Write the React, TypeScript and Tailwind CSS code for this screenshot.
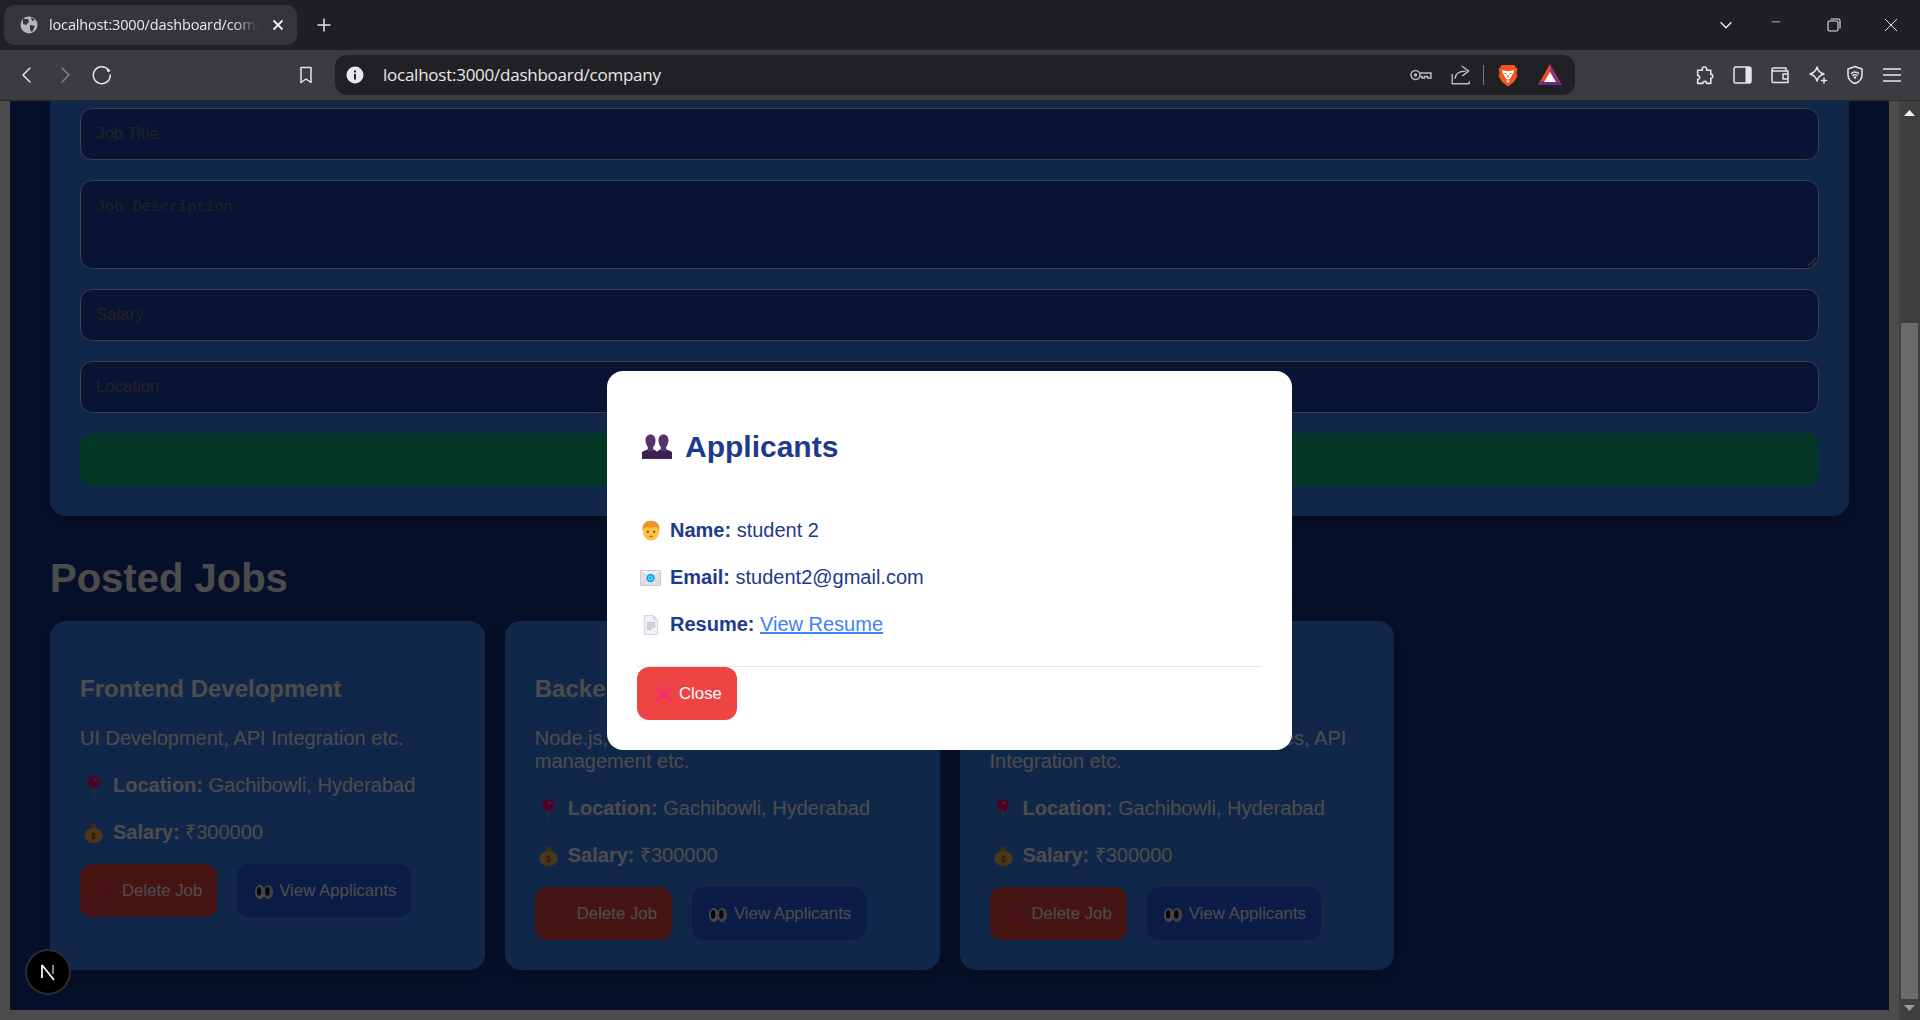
import React from "react";

const sans = "font-['Liberation_Sans',Arial,sans-serif]";

function Cross({ cls }: { cls: string }) {
  return (
    <svg viewBox="0 0 24 24" preserveAspectRatio="none" className={cls}>
      <path d="M2 1 L22 23 M22 1 L2 23" stroke="#f8316a" strokeWidth="5" fill="none" />
    </svg>
  );
}
function Eyes({ cls }: { cls: string }) {
  return (
    <svg viewBox="0 0 24 24" preserveAspectRatio="none" className={cls}>
      <ellipse cx="6.500" cy="12" rx="6.500" ry="12" fill="#f0f0f5" />
      <ellipse cx="17.500" cy="12" rx="6.500" ry="12" fill="#dedee6" />
      <ellipse cx="5.500" cy="11" rx="3" ry="7.500" fill="#1e1630" />
      <ellipse cx="16.500" cy="11" rx="3" ry="7.500" fill="#1e1630" />
    </svg>
  );
}
function Pin({ cls }: { cls: string }) {
  return (
    <svg viewBox="0 0 12 20" className={cls}>
      <rect x="5.400" y="10" width="1.200" height="10" fill="#a0a0a8" />
      <circle cx="6" cy="6" r="6" fill="#ff0a78" />
      <circle cx="7.500" cy="3.800" r="1.200" fill="#ff9ac0" />
    </svg>
  );
}
function Bag({ cls }: { cls: string }) {
  return (
    <svg viewBox="0 0 24 24" preserveAspectRatio="none" className={cls}>
      <path d="M8.500 0.500 L12 2 L15.500 0.500 L14.500 7 L9.500 7 Z" fill="#e09a30" />
      <ellipse cx="12" cy="15" rx="11.500" ry="9" fill="#ffbd4d" />
      <text x="12" y="19.500" textAnchor="middle" fontSize="11" fontFamily="Liberation Sans" fill="#6b4410">$</text>
    </svg>
  );
}
function Busts({ cls }: { cls: string }) {
  return (
    <svg viewBox="0 0 30 25" className={cls}>
      <path d="M0 25 L0 20 C0 17.500 3 16.500 5.500 15.500 L6 13.500 C4.500 11 3.500 8.500 3.500 6.500 C3.500 3 5.500 0.500 8.500 0.500 C11.500 0.500 13.500 3 13.500 6.500 C13.500 8.500 13 11 11 13.500 L11.500 15.500 C13.500 16.500 15 17 15 20 L15 25 Z" fill="#53326f" />
      <path d="M15 25 L15 20 C15 17 16.500 16.500 18.500 15.500 L19 13.500 C17 11 16.500 8.500 16.500 6.500 C16.500 3 18.500 0.500 21.500 0.500 C24.500 0.500 26.500 3 26.500 6.500 C26.500 8.500 25.500 11 24 13.500 L24.500 15.500 C27 16.500 30 17.500 30 20 L30 25 Z" fill="#53326f" />
      <path d="M0 18.500 C1 17 3 16.500 5 16 C6 18 10.500 18 11.500 16 C13 16.500 14 17 15 18 C16 17 17 16.500 18.500 16 C19.500 18 24 18 25 16 C27 16.500 29 17 30 18.500 V24.500 H0 Z" fill="#3b2150" />
    </svg>
  );
}
function Person({ cls }: { cls: string }) {
  return (
    <svg viewBox="0 0 24 26" className={cls}>
      <ellipse cx="12" cy="14.500" rx="10" ry="11" fill="#fdc23e" />
      <path d="M2 14 C0 6 5 1 12 1 C19 1 24 6 22 14 C21 11.500 19.500 9.500 18 8.500 C14 10 9 10 6 8.500 C4.500 9.500 3 11.500 2 14 Z" fill="#f2902a" />
      <circle cx="8" cy="14.500" r="1.300" fill="#5d3b1e" />
      <circle cx="16" cy="14.500" r="1.300" fill="#5d3b1e" />
      <ellipse cx="12" cy="20.500" rx="2.200" ry="1" fill="#d2455a" />
    </svg>
  );
}
function Mail({ cls }: { cls: string }) {
  return (
    <svg viewBox="0 0 24 18" className={cls}>
      <rect x="0.500" y="0.500" width="23" height="17" rx="1" fill="#e3dfe6" stroke="#c4bfd0" />
      <path d="M0.500 1 L12 10 L23.500 1" fill="#f4f2f6" stroke="#c4bfd0" strokeWidth="0.800" />
      <path d="M0.500 17.500 L9 8 M23.500 17.500 L15 8" stroke="#c4bfd0" strokeWidth="0.800" />
      <circle cx="12" cy="9" r="4.800" fill="#0fa5ee" />
      <circle cx="12" cy="9" r="2.200" fill="none" stroke="#bfeaff" strokeWidth="0.900" />
    </svg>
  );
}
function Page({ cls }: { cls: string }) {
  return (
    <svg viewBox="0 0 18 24" className={cls}>
      <path d="M1 0.700 L12 0.700 L17 5.700 L17 23.300 L1 23.300 Z" fill="#f2eff6" stroke="#cfc8da" strokeWidth="1" />
      <path d="M12 0.700 L12 5.700 L17 5.700 Z" fill="#d8d2e2" />
      <path d="M4 9.500 H14 M4 12 H14 M4 14.500 H14 M4 17 H10" stroke="#a39bb0" strokeWidth="1" />
    </svg>
  );
}

function Row({ icon, label, children }: { icon: React.ReactNode; label: string; children: React.ReactNode }) {
  return (
    <p className="flex items-center h-[23px] mb-[24px] text-[20px] leading-[23px] whitespace-nowrap">
      <span className="flex items-center justify-center w-[27px] h-[23px] mr-[6px] shrink-0">{icon}</span>
      <b className="font-bold">{label}</b>
      <span className="ml-[5.500px]">{children}</span>
    </p>
  );
}

function JobButton({ red, icon, text }: { red?: boolean; icon: React.ReactNode; text: string }) {
  return (
    <button className={`flex items-center h-[53px] px-[15px] rounded-[12px] text-[16.800px] text-white ${red ? "bg-[#ef4444]" : "bg-[#2563eb]"}`}>
      <span className="flex items-center justify-center w-[23px] h-[22px] mr-[4px]">{icon}</span>
      {text}
    </button>
  );
}

function JobCard({ title, desc }: { title: string; desc: string }) {
  return (
    <div className="bg-[#3b82f6] rounded-[16px] p-[30px] flex flex-col text-white shadow-[0_4px_20px_rgba(0,0,0,0.3)]">
      <h3 className="text-[24px] leading-[28px] font-bold mt-[24px] mb-[24px]">{title}</h3>
      <p className="text-[20px] leading-[23px] mb-[24px]">{desc}</p>
      <Row icon={<Pin cls="w-[12px] h-[20px]" />} label="Location:">Gachibowli, Hyderabad</Row>
      <Row icon={<Bag cls="w-[19px] h-[20px]" />} label="Salary:">₹300000</Row>
      <div className="flex gap-[20px] -mt-[4px]">
        <JobButton red icon={<Cross cls="w-[18px] h-[16px]" />} text="Delete Job" />
        <JobButton icon={<Eyes cls="w-[18px] h-[14px] mt-[3px]" />} text="View Applicants" />
      </div>
    </div>
  );
}

const inp = "w-full h-[52px] px-[15px] rounded-[12px] bg-[#1e40af] border border-[#cbd5e1] flex items-center text-[16.800px] text-[#757575]";

function Ic({ w, children, cls = "" }: { w: string; children: React.ReactNode; cls?: string }) {
  return <span className={`flex items-center justify-center shrink-0 ${w} ${cls}`}>{children}</span>;
}
const S = (p: { size?: number; children: React.ReactNode; stroke?: string; sw?: number }) => (
  <svg width={p.size ?? 20} height={p.size ?? 20} viewBox="0 0 20 20" fill="none" stroke={p.stroke ?? "#e6e6e8"} strokeWidth={p.sw ?? 1.500} strokeLinecap="round" strokeLinejoin="round">
    {p.children}
  </svg>
);

function Chrome() {
  return (
    <div className="shrink-0 font-['Open_Sans',sans-serif]">
      <div className="h-[50px] bg-[#1f1f24] flex items-center">
        <div className="ml-[4px] w-[293px] h-[40px] rounded-[10px] bg-[#35363b] flex items-center">
          <svg width="18" height="18" viewBox="0 0 18 18" className="ml-[16px] shrink-0">
            <circle cx="9" cy="9" r="8.500" fill="#b5b6ba" />
            <path d="M3 3 L8 3 L9 6 L6 9 L3 8 Z M10 9 L15 10 L12 16 L10 14 Z M11 1 L15 4 L12 5 Z" fill="#35363b" />
          </svg>
          <span className="ml-[11px] w-[209px] overflow-hidden whitespace-nowrap text-[14.500px] tracking-[-0.150px] text-[#e8e8ea] [mask-image:linear-gradient(to_right,black_88%,transparent)]">localhost:3000/dashboard/company</span>
          <svg width="12" height="12" viewBox="0 0 12 12" className="ml-[14px]"><path d="M1.500 1.500 L10.500 10.500 M10.500 1.500 L1.500 10.500" stroke="#f0f0f0" strokeWidth="1.800" /></svg>
        </div>
        <svg width="14" height="14" viewBox="0 0 14 14" className="ml-[20px]"><path d="M7 0.500 V13.500 M0.500 7 H13.500" stroke="#e8e8e8" strokeWidth="1.500" /></svg>
        <div className="ml-auto flex items-center">
          <Ic w="w-[48px]"><S size={18}><path d="M4 7 L10 13 L16 7" strokeWidth="1.800" strokeLinecap="butt" /></S></Ic>
          <Ic w="w-[56px]"><S size={14}><path d="M1 5.500 H13" strokeWidth="1.100" strokeLinecap="butt" /></S></Ic>
          <Ic w="w-[56px]"><svg width="14" height="14" viewBox="0 0 14 14" fill="none" stroke="#e6e6e8" strokeWidth="1.100"><rect x="1" y="3" width="10" height="10" rx="1.500" /><path d="M3.500 1 H11.500 C12.500 1 13 1.500 13 2.500 V10.500" /></svg></Ic>
          <Ic w="w-[58px]"><svg width="14" height="14" viewBox="0 0 14 14" fill="none" stroke="#e6e6e8" strokeWidth="1"><path d="M1 1 L13 13 M13 1 L1 13" /></svg></Ic>
        </div>
      </div>
      <div className="h-[51px] bg-[#3b3b40] border-b border-b-[#29292c] flex items-center pl-[8px]">
        <Ic w="w-[38px]"><S size={20}><path d="M13 3 L6 10 L13 17" /></S></Ic>
        <Ic w="w-[38px]"><S size={20} stroke="#85858a"><path d="M7 3 L14 10 L7 17" /></S></Ic>
        <Ic w="w-[36px]"><S size={20}><path d="M16.500 5 A8.500 8.500 0 1 0 18.300 10" /><circle cx="16.500" cy="5.500" r="1.600" fill="#e6e6e8" stroke="none" /></S></Ic>
        <Ic w="w-[38px]" cls="ml-[167px]"><S size={20}><path d="M5 2.500 H15 V17.500 L10 14 L5 17.500 Z" /></S></Ic>
        <div className="ml-[10px] w-[1240px] h-[40px] rounded-[12px] bg-[#212125] flex items-center">
          <svg width="18" height="18" viewBox="0 0 18 18" className="ml-[11px] shrink-0">
            <circle cx="9" cy="9" r="8.500" fill="#e8e8ea" />
            <rect x="8" y="8" width="2" height="5.500" fill="#212125" />
            <rect x="8" y="4.500" width="2" height="2" fill="#212125" />
          </svg>
          <span className="ml-[19px] text-[17px] tracking-[-0.250px] text-[#e8e8ea] whitespace-nowrap">localhost:3000/dashboard/company</span>
          <div className="ml-auto flex items-center pr-[13px]">
            <Ic w="w-[24px]">
              <svg width="22" height="12" viewBox="0 0 22 12" fill="none" stroke="#b9b9bd" strokeWidth="1.500"><circle cx="5.500" cy="6" r="4.500" /><circle cx="5.500" cy="6" r="1" fill="#b9b9bd" /><path d="M10 4 H21 V9 H17.500 V7.500 H14.500 V9 H12 V7.500 H10" /></svg>
            </Ic>
            <Ic w="w-[24px]" cls="ml-[16px]"><S size={22} stroke="#b9b9bd" sw={1.300}><path d="M2 9.500 V18 H17.500 V16 M4.500 13 C5 9 8.500 6.500 14 6.500 M11 2 L17 6.500 L11.500 10.500" /></S></Ic>
            <span className="ml-[10px] w-[1px] h-[20px] bg-[#77777c]" />
            <Ic w="w-[24px]" cls="ml-[12px]">
              <svg width="20" height="23" viewBox="0 0 20 23"><path d="M4 1 L16 1 L19.500 5 L18.500 9 L19.500 12 L16 18 L10 22.500 L4 18 L0.500 12 L1.500 9 L0.500 5 Z" fill="#f1561f" /><path d="M4.500 6 L8 7 H12 L15.500 6 L16 8 L14 11 L13 13.500 L11 15.500 H9 L7 13.500 L6 11 L4 8 Z M8 16.500 H12 L10 19 Z" fill="#fff" /><path d="M6.500 9 L8.500 10 M13.500 9 L11.500 10 M10 11 V14" stroke="#f1561f" strokeWidth="1" /></svg>
            </Ic>
            <Ic w="w-[24px]" cls="ml-[18px]">
              <svg width="24" height="22" viewBox="0 0 24 22"><path d="M12 0 L24 21 L18 21 L12 10 Z" fill="#9c2d82" /><path d="M12 0 L0 21 L6 21 L12 10 Z" fill="#ee4a2c" /><path d="M0 21 L24 21 L20 17 L4 17 Z" fill="#652c89" /><path d="M12 8 L18 18 L6 18 Z" fill="#fff" /></svg>
            </Ic>
          </div>
        </div>
        <div className="ml-[110px] flex items-center">
          <Ic w="w-[38px]"><S size={21}><path d="M8 3 C8 1.500 12 1.500 12 3.500 V5 H16 V9 C18.500 8.500 18.500 13 16 12.500 V17.500 H12 C12.500 15 8 15 8.500 17.500 H3.500 V13.500 C6 14 6 9.500 3.500 10 V5 H8 Z" /></S></Ic>
          <Ic w="w-[38px]"><svg width="19" height="18" viewBox="0 0 19 18"><rect x="1" y="1" width="17" height="16" rx="2" fill="none" stroke="#e6e6e8" strokeWidth="1.500" /><rect x="12.500" y="1" width="5.500" height="16" fill="#e6e6e8" /></svg></Ic>
          <Ic w="w-[38px]"><S size={20}><path d="M2 5 V16 C2 17 2.500 17.500 3.500 17.500 H18 V6 H3.500 C2.500 6 2 5.500 2 4.500 C2 3.500 2.500 3 3.500 3 H16 V6 M18 9 H13 V14 H18" /></S></Ic>
          <Ic w="w-[37px]"><S size={20}><path d="M9 2 C10 6 12 8 16 9 C12 10 10 12 9 16 C8 12 6 10 2 9 C6 8 8 6 9 2 Z" /><path d="M16 13 V18 M13.500 15.500 H18.500" /></S></Ic>
          <Ic w="w-[38px]"><S size={20}><path d="M10 1.500 L17 4 V10 C17 14 14 17 10 18.500 C6 17 3 14 3 10 V4 Z" /><path d="M6.500 8.500 C8.500 6.500 11.500 6.500 13.500 8.500 M8 10.500 C9 9.500 11 9.500 12 10.500" /><circle cx="10" cy="12.500" r="0.500" fill="#e6e6e8" /></S></Ic>
          <Ic w="w-[36px]"><S size={20}><path d="M1 4 H19 M1 10 H19 M1 16 H19" strokeLinecap="butt" /></S></Ic>
        </div>
      </div>
    </div>
  );
}

export default function App() {
  return (
    <div className={`h-screen w-full overflow-hidden flex flex-col ${sans}`}>
      <Chrome />
      <div className="flex-1 flex min-h-0">
        <div className="relative flex-1 min-w-0 bg-white px-[10px] pb-[10px] overflow-hidden">
          <div className="h-full overflow-hidden bg-[#17388c] px-[40px]">
            <div className="bg-[#3b82f6] rounded-b-[16px] px-[30px] pt-[7px] pb-[30px] flex flex-col gap-[20px] shadow-[0_4px_20px_rgba(0,0,0,0.3)]">
              <div className={inp}>Job Title</div>
              <div className="relative w-full h-[89px] px-[15px] pt-[17px] rounded-[12px] bg-[#1e40af] border border-[#cbd5e1] text-[15.200px] leading-[18px] text-[#757575] font-['Liberation_Mono',monospace]">
                Job Description
                <svg width="10" height="10" viewBox="0 0 10 10" className="absolute right-[1px] bottom-[1px]"><path d="M1 9 L9 1 M5 9 L9 5" stroke="#9ca3af" strokeWidth="1.500" /></svg>
              </div>
              <div className={inp}>Salary</div>
              <div className={inp}>Location</div>
              <div className="h-[53px] rounded-[12px] bg-[#10b981]" />
            </div>
            <h2 className="mt-[39px] mb-[20px] text-[40px] leading-[46px] font-bold text-white">Posted Jobs</h2>
            <div className="grid grid-cols-4 gap-[20px]">
              <JobCard title="Frontend Development" desc="UI Development, API Integration etc." />
              <JobCard title="Backend Development" desc="Node.js, Express.js, Database management etc." />
              <JobCard title="Fullstack Development" desc="Frontend, Backend, Cloud Services, API Integration etc." />
            </div>
          </div>
          {/* dimming overlay with the centred dialog */}
          <div className="absolute inset-0 bg-black/70 flex items-center justify-center">
            <div className="w-[685px] h-[379px] bg-white rounded-[16px] p-[30px] text-[#1e3a8a]">
              <h2 className="flex items-center mt-[28px] mb-[55px] text-[30px] leading-[35px] font-bold">
                <span className="flex items-center justify-center w-[40px] h-[35px] mr-[8px]"><Busts cls="w-[30px] h-[25px]" /></span>
                Applicants
              </h2>
              <Row icon={<Person cls="w-[20px] h-[21px]" />} label="Name:">student 2</Row>
              <Row icon={<Mail cls="w-[21px] h-[16px]" />} label="Email:">student2@gmail.com</Row>
              <p className="flex items-center h-[23px] text-[20px] leading-[23px] whitespace-nowrap">
                <span className="flex items-center justify-center w-[27px] h-[23px] mr-[6px] shrink-0"><Page cls="w-[16px] h-[20px]" /></span>
                <b className="font-bold">Resume:</b>
                <a className="ml-[5.500px] text-[#3b82f6] underline">View Resume</a>
              </p>
              <div className="mt-[30px] border-t border-t-[#e5e7eb]" />
              <button className="flex items-center h-[53px] px-[15px] rounded-[12px] bg-[#ef4444] text-[16.800px] text-white">
                <span className="flex items-center justify-center w-[23px] h-[22px] mr-[4px]"><Cross cls="w-[18px] h-[16px]" /></span>
                Close
              </button>
            </div>
          </div>
          {/* framework dev badge */}
          <div className="absolute left-[25px] bottom-[25px] w-[46px] h-[46px] rounded-full bg-black border-2 border-[#2c2c30] flex items-center justify-center">
            <svg width="20" height="20" viewBox="0 0 20 20"><path d="M4 3 V16" stroke="#fff" strokeWidth="1.700" /><path d="M4 3 L16 18" stroke="#fff" strokeWidth="1.700" /><path d="M15 3 V12" stroke="#999" strokeWidth="1.700" /></svg>
          </div>
        </div>
        {/* browser scrollbar */}
        <div className="w-[21px] shrink-0 bg-[#3f3f3f] flex flex-col items-center">
          <svg width="11" height="6" viewBox="0 0 11 6" className="shrink-0 mt-[9px]"><path d="M5.500 0 L11 6 H0 Z" fill="#f0f0f0" /></svg>
          <div className="shrink-0 mt-[207px] w-[17px] h-[676px] bg-[#6b6b6b]" />
          <svg width="11" height="6" viewBox="0 0 11 6" className="shrink-0 mt-auto mb-[9px]"><path d="M5.500 6 L11 0 H0 Z" fill="#9a9a9a" /></svg>
        </div>
      </div>
    </div>
  );
}
